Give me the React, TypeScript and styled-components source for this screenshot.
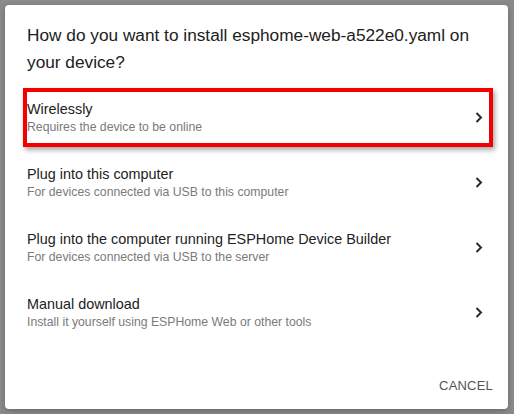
import { FC } from "react";
import styled, { createGlobalStyle, css } from "styled-components";

const GlobalStyle = createGlobalStyle`
  html, body {
    margin: 0;
    padding: 0;
    background: #8b8b8b;
  }
  body {
    font-family: "Liberation Sans", Arial, sans-serif;
  }
`;

const Backdrop = styled.div`
  width: 514px;
  height: 414px;
  padding: 5px 6px 5px 5px;
  box-sizing: border-box;
  display: flex;
`;

const Dialog = styled.div`
  flex: 1;
  background: #ffffff;
  border-radius: 4px;
  box-shadow: 0 2px 6px rgba(0, 0, 0, 0.25);
  display: flex;
  flex-direction: column;
  padding: 17px 15px 0 15px;
`;

const Title = styled.h2`
  margin: 0 0 9px 7px;
  font-size: 17.25px;
  line-height: 27px;
  font-weight: 400;
  color: #212121;
`;

const List = styled.div`
  display: flex;
  flex-direction: column;
`;

const Row = styled.div<{ $highlighted?: boolean }>`
  position: relative;
  height: 65px;
  display: flex;
  align-items: center;
  padding: 0 10px 0 7px;
  cursor: pointer;

  ${(p) =>
    p.$highlighted &&
    css`
      &::after {
        content: "";
        position: absolute;
        left: 3px;
        right: 0;
        top: 3px;
        bottom: 3px;
        border: 4px solid #f50000;
        box-shadow: 2px 3px 5px rgba(0, 0, 0, 0.35);
        pointer-events: none;
      }
    `}
`;

const Texts = styled.div`
  flex: 1;
  display: flex;
  flex-direction: column;
`;

const Primary = styled.span`
  font-size: 14.4px;
  line-height: 20px;
  color: #222222;
`;

const Secondary = styled.span`
  font-size: 12.25px;
  line-height: 17px;
  color: #7a7a7a;
`;

const Chevron = styled.svg`
  width: 8px;
  height: 11px;
  flex-shrink: 0;
`;

const Actions = styled.div`
  margin-top: auto;
  display: flex;
  justify-content: flex-end;
  padding: 0 0 16px;
`;

const TextButton = styled.button`
  border: none;
  background: none;
  font-family: "Liberation Sans", Arial, sans-serif;
  font-size: 13px;
  letter-spacing: 0.2px;
  color: #555555;
  padding: 0;
  cursor: pointer;
`;

const options = [
  { title: "Wirelessly", sub: "Requires the device to be online" },
  { title: "Plug into this computer", sub: "For devices connected via USB to this computer" },
  {
    title: "Plug into the computer running ESPHome Device Builder",
    sub: "For devices connected via USB to the server",
  },
  { title: "Manual download", sub: "Install it yourself using ESPHome Web or other tools" },
];

const App: FC = () => {
  return (
    <>
      <GlobalStyle />
      <Backdrop>
        <Dialog>
          <Title>How do you want to install esphome-web-a522e0.yaml on your device?</Title>
          <List>
            {options.map((o, i) => (
              <Row key={o.title} $highlighted={i === 0}>
                <Texts>
                  <Primary>{o.title}</Primary>
                  <Secondary>{o.sub}</Secondary>
                </Texts>
                <Chevron viewBox="0 0 8 11">
                  <path d="M1.5 1 L6 5.5 L1.5 10" fill="none" stroke="#2b2b2b" strokeWidth="2" />
                </Chevron>
              </Row>
            ))}
          </List>
          <Actions>
            <TextButton>CANCEL</TextButton>
          </Actions>
        </Dialog>
      </Backdrop>
    </>
  );
};

export default App;
